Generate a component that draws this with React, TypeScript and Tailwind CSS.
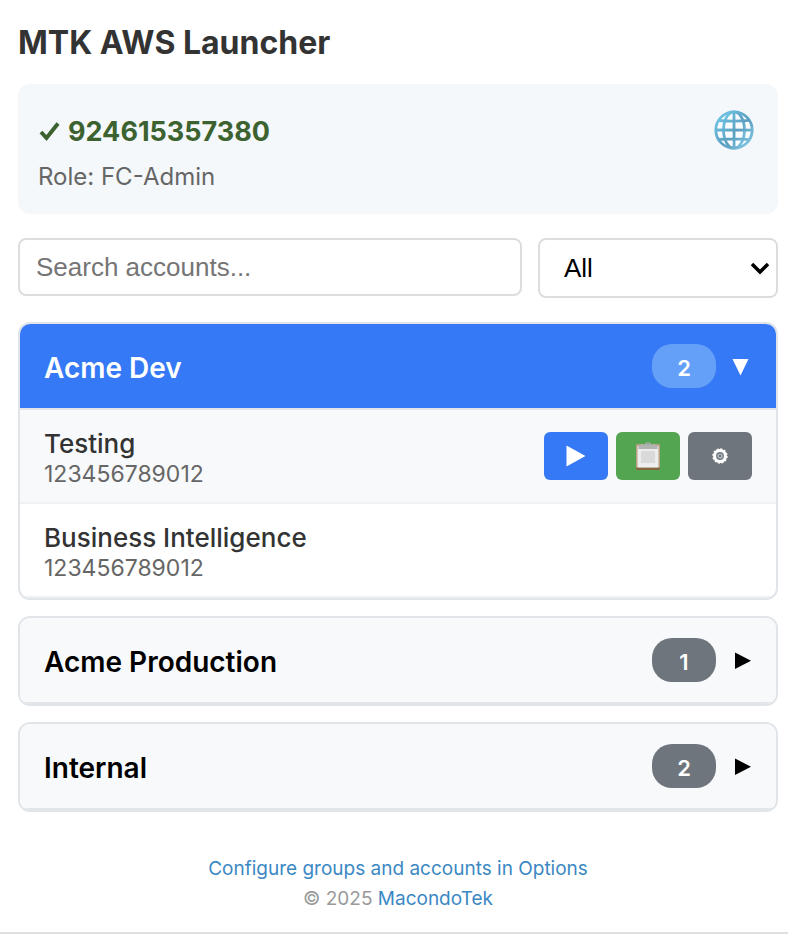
import { useState } from 'react';

type Account = { name: string; id: string };
type Group = { name: string; accounts: Account[] };

const groups: Group[] = [
  {
    name: 'Acme Dev',
    accounts: [
      { name: 'Testing', id: '123456789012' },
      { name: 'Business Intelligence', id: '123456789012' },
    ],
  },
  { name: 'Acme Production', accounts: [{ name: 'Production', id: '123456789012' }] },
  {
    name: 'Internal',
    accounts: [
      { name: 'Shared Services', id: '123456789012' },
      { name: 'Sandbox', id: '123456789012' },
    ],
  },
];

function GlobeIcon() {
  return (
    <svg viewBox="0 0 40 40" className="size-10" aria-hidden="true">
      <defs>
        <linearGradient id="globe" x1="0" y1="0" x2="1" y2="1">
          <stop offset="0" stopColor="#74cbec" />
          <stop offset="0.55" stopColor="#5b9fc0" />
          <stop offset="1" stopColor="#86cce8" />
        </linearGradient>
      </defs>
      <circle cx="20" cy="20" r="18.5" fill="#fbfdfe" />
      <g fill="none" stroke="url(#globe)" strokeWidth="2.8">
        <circle cx="20" cy="20" r="18.2" />
        <ellipse cx="20" cy="20" rx="10.5" ry="18.2" />
        <path d="M20 1.5 20.1 38.5M1.5 20 38.5 20.1M4.5 10.5Q20 11.8 35.5 10.4M4.5 29.5Q20 28.2 35.5 29.6" />
      </g>
    </svg>
  );
}

function ClipboardIcon() {
  return (
    <svg viewBox="0 0 26 30" className="h-[30px] w-[26px]" aria-hidden="true">
      <rect x="1" y="3" width="24" height="26" rx="1" fill="#b5a182" />
      <path d="M1 26.500h24V28a1 1 0 0 1-1 1H2a1 1 0 0 1-1-1Z" fill="#82673f" />
      <rect x="2.500" y="5" width="21" height="21.500" fill="#ededed" />
      <rect x="6" y="10" width="14" height="12" fill="#dadada" />
      <path d="M3.500 8V5Q3.500 3.500 6 3.500h4q.5-2.500 3-2.500t3 2.500h4q2.500 0 2.500 1.500v3Z" fill="#b0b3b1" />
      <circle cx="13" cy="2.800" r="1" fill="#7d9a86" />
    </svg>
  );
}

function GearIcon() {
  return (
    <svg viewBox="0 0 18 18" className="size-[18px]" fill="none" stroke="#fff" aria-hidden="true">
      <circle cx="9" cy="9" r="7" strokeWidth="1.400" strokeDasharray="2.200 1.465" />
      <circle cx="9" cy="9" r="5.400" strokeWidth="3" />
      <circle cx="9" cy="9" r="2" strokeWidth="1.200" stroke="#c5c8ca" />
    </svg>
  );
}

function RowActions() {
  const base = 'flex h-12 w-16 items-center justify-center rounded-md';
  return (
    <div className="flex gap-2">
      <button type="button" aria-label="Open console" className={`${base} bg-[#3579f6]`}>
        <svg viewBox="0 0 20 22" className="h-[22px] w-5" fill="#fff" aria-hidden="true">
          <path d="M.5.5 19.500 11 .5 21.500Z" />
        </svg>
      </button>
      <button type="button" aria-label="Copy account ID" className={`${base} bg-[#53a551]`}>
        <ClipboardIcon />
      </button>
      <button type="button" aria-label="Settings" className={`${base} bg-[#6e757d]`}>
        <GearIcon />
      </button>
    </div>
  );
}

function GroupCard({ group, open, onToggle }: { group: Group; open: boolean; onToggle: () => void }) {
  return (
    <section className="overflow-hidden rounded-xl border-2 border-[#e1e5e9] bg-white">
      <button
        type="button"
        aria-expanded={open}
        onClick={onToggle}
        className={`flex w-full items-center gap-4 border-b-2 border-[#e1e5e9] px-6 py-5 text-left ${
          open ? 'bg-[#3579f6] text-white' : 'bg-[#f8f9fb] text-black'
        }`}
      >
        <span className="flex-1 pt-1 text-[28px] leading-10 font-semibold">{group.name}</span>
        <span
          className={`flex h-11 w-16 items-center justify-center rounded-[20px] pt-1 text-[22px] font-semibold text-white ${
            open ? 'bg-[#64a0f8]' : 'bg-[#6e757d]'
          }`}
        >
          {group.accounts.length}
        </span>
        <svg viewBox="0 0 20 20" className="size-5" fill="currentColor" aria-hidden="true">
          {open ? <path d="M.500 3h16L8.500 19.500Z" /> : <path d="M3 2.500v16.500L19 10.700Z" />}
        </svg>
      </button>
      {open &&
        group.accounts.map((account, i) => (
          <div
            key={account.name}
            className={`flex items-center justify-between border-b-2 border-[#f0f1f2] px-6 py-[14px] ${i === 0 ? 'bg-[#f8f9fb]' : ''}`}
          >
            <div className="pt-1">
              <div className="text-[26px] leading-8 font-medium text-[#333]">{account.name}</div>
              <div className="text-[23px] leading-7 text-[#666]">{account.id}</div>
            </div>
            {i === 0 && <RowActions />}
          </div>
        ))}
    </section>
  );
}

export default function App() {
  const [openGroup, setOpenGroup] = useState('Acme Dev');
  return (
    <main className="border-b-2 border-[#e0e0e0] bg-white pt-6 pr-[10px] pb-5 pl-[18px] font-['Inter','Liberation_Sans',sans-serif]">
      <h1 className="text-[32px] leading-[38px] font-bold text-[#333]">MTK AWS Launcher</h1>

      <section className="mt-[22px] flex items-start justify-between rounded-xl bg-[#f4f8fb] px-5 pt-6 pb-4">
        <div>
          <div className="flex items-center gap-2 text-[27px] leading-[48px] font-bold text-[#3c6230]">
            <svg viewBox="0 0 22 20" className="h-5 w-[22px]" fill="none" stroke="currentColor" strokeWidth="4" aria-hidden="true">
              <path d="M3 10 8.500 16 20 1.500" />
            </svg>
            924615357380
          </div>
          <div className="text-2xl leading-[42px] text-[#666]">Role: FC-Admin</div>
        </div>
        <div className="pt-[2px] pr-1">
          <GlobeIcon />
        </div>
      </section>

      <div className="mt-6 flex items-start gap-4">
        <input
          type="text"
          aria-label="Search accounts"
          placeholder="Search accounts..."
          className="h-[58px] min-w-0 flex-1 rounded-lg border-2 border-[#ddd] px-4 font-['Liberation_Sans',sans-serif] text-[26px] placeholder:text-[#757575]"
        />
        <div className="relative w-60">
          <select
            aria-label="Filter accounts"
            className="h-[60px] w-full appearance-none rounded-lg border-2 border-[#ddd] bg-white px-6 font-['Liberation_Sans',sans-serif] text-[26px] text-black"
          >
            <option>All</option>
          </select>
          <svg
            viewBox="0 0 20 14"
            className="pointer-events-none absolute top-6 right-2 h-[14px] w-5"
            fill="none"
            stroke="#000"
            strokeWidth="3.500"
            aria-hidden="true"
          >
            <path d="M2 2 10 10 18 2" />
          </svg>
        </div>
      </div>

      <div className="mt-6 flex flex-col gap-4">
        {groups.map((group) => (
          <GroupCard
            key={group.name}
            group={group}
            open={group.name === openGroup}
            onToggle={() => setOpenGroup(group.name === openGroup ? '' : group.name)}
          />
        ))}
      </div>

      <footer className="mt-[42px] -mb-[2px] text-center text-[19px] leading-[30px] text-[#999]">
        <a href="#options" className="block text-[#3b88c3]">
          Configure groups and accounts in Options
        </a>
        <p>
          © 2025{' '}
          <a href="#macondotek" className="text-[#3b88c3]">
            MacondoTek
          </a>
        </p>
      </footer>
    </main>
  );
}
